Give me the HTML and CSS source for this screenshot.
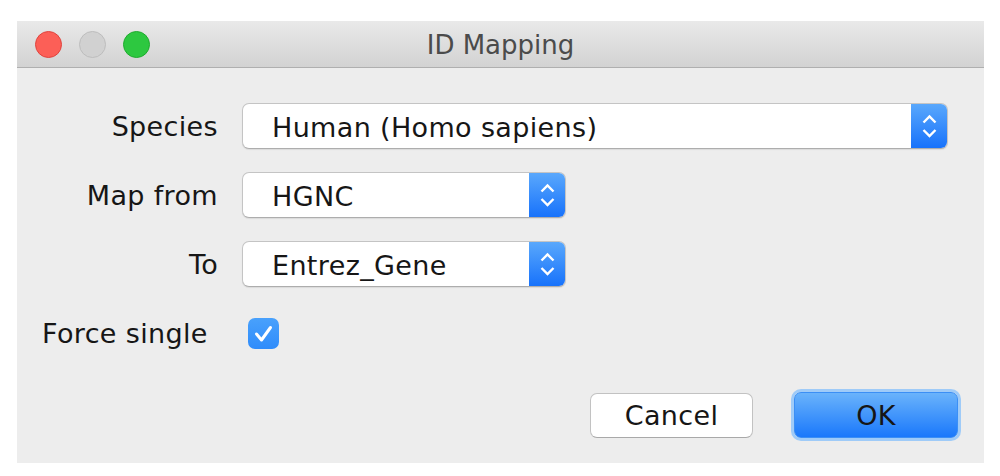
FILE: index.html
```html
<!DOCTYPE html>
<html>
<head>
<meta charset="utf-8">
<title>ID Mapping</title>
<link rel="stylesheet" href="styles.css">
</head>
<body>
<div class="window">
  <div class="titlebar">
    <div class="lights">
      <span class="light red"></span>
      <span class="light gray"></span>
      <span class="light green"></span>
    </div>
    <div class="title">ID Mapping</div>
  </div>
  <div class="content">
    <div class="form">
      <div class="label">Species</div>
      <div class="select wide">
        <span class="value">Human (Homo sapiens)</span>
        <span class="stepper"><svg width="37" height="46" viewBox="0 0 37 46"><path d="M12.5 19.5 L18.5 13.5 L24.5 19.5" /><path d="M12.5 27 L18.5 33 L24.5 27" /></svg></span>
      </div>
      <div class="label">Map from</div>
      <div class="select narrow">
        <span class="value">HGNC</span>
        <span class="stepper"><svg width="37" height="46" viewBox="0 0 37 46"><path d="M12.5 19.5 L18.5 13.5 L24.5 19.5" /><path d="M12.5 27 L18.5 33 L24.5 27" /></svg></span>
      </div>
      <div class="label">To</div>
      <div class="select narrow">
        <span class="value">Entrez_Gene</span>
        <span class="stepper"><svg width="37" height="46" viewBox="0 0 37 46"><path d="M12.5 19.5 L18.5 13.5 L24.5 19.5" /><path d="M12.5 27 L18.5 33 L24.5 27" /></svg></span>
      </div>
      <div class="label left">Force single</div>
      <div class="check-cell">
        <span class="checkbox"><svg width="31" height="31" viewBox="0 0 31 31"><path d="M8.5 16 L13.5 22 L22.5 9.5" /></svg></span>
      </div>
    </div>
    <div class="buttons">
      <button class="btn cancel">Cancel</button>
      <button class="btn ok">OK</button>
    </div>
  </div>
</div>
</body>
</html>
```
FILE: styles.css
```css
html, body {
  margin: 0;
  padding: 0;
  background: #ffffff;
}
body {
  font-family: "DejaVu Sans", Verdana, sans-serif;
  color: #161616;
}
.window {
  margin: 21px 0 0 17px;
  width: 967px;
  height: 442px;
  background: #ededed;
  display: flex;
  flex-direction: column;
}
.titlebar {
  position: relative;
  height: 46px;
  background: linear-gradient(#e9e9e9, #d2d2d2);
  border-bottom: 1px solid #afafaf;
  display: flex;
  align-items: center;
  justify-content: center;
}
.lights {
  position: absolute;
  left: 18px;
  top: 10px;
  display: flex;
  gap: 17px;
}
.light {
  width: 25px;
  height: 25px;
  border-radius: 50%;
  border: 1px solid;
}
.light.red { background: #fc5f57; border-color: #e0443e; }
.light.gray { background: #d1d1d1; border-color: #bdbdbd; }
.light.green { background: #2dc840; border-color: #1fab2e; }
.title {
  font-size: 26px;
  color: #4b4b4b;
  margin-top: 2px;
}
.content {
  flex: 1;
  padding: 35px 26px 25px 25px;
  display: flex;
  flex-direction: column;
}
.form {
  display: grid;
  grid-template-columns: 176px 1fr;
  column-gap: 24px;
  row-gap: 23px;
  align-items: center;
}
.label {
  font-size: 27px;
  letter-spacing: 0.35px;
  text-align: right;
  line-height: 48px;
  height: 46px;
}
.label.left {
  text-align: left;
}
.select {
  height: 44px;
  background: #ffffff;
  border: 1px solid #c4c4c4;
  border-bottom-color: #adadad;
  border-radius: 7px;
  display: flex;
  align-items: center;
  box-shadow: 0 1px 1px rgba(0,0,0,0.08);
  overflow: hidden;
}
.select.wide { width: 704px; }
.select.narrow { width: 322px; }
.value {
  flex: 1;
  padding-left: 29px;
  padding-top: 2px;
  font-size: 27px;
  letter-spacing: 0.35px;
  color: #161616;
}
.stepper {
  width: 37px;
  height: 46px;
  margin: -1px -1px -1px 0;
  background: linear-gradient(#5ba9fc, #1671fb);
  border-radius: 0 7px 7px 0;
  display: flex;
}
.stepper path {
  fill: none;
  stroke: #ffffff;
  stroke-width: 2.4;
}
.check-cell {
  height: 46px;
  display: flex;
  align-items: center;
}
.checkbox {
  margin-left: 6px;
  width: 31px;
  height: 31px;
  border-radius: 7px;
  background: linear-gradient(#49a1fc, #2f8cfb);
  display: flex;
}
.checkbox path {
  fill: none;
  stroke: #ffffff;
  stroke-width: 3;
  stroke-linecap: round;
  stroke-linejoin: round;
}
.buttons {
  margin-top: auto;
  display: flex;
  justify-content: flex-end;
  align-items: center;
  gap: 41px;
}
.btn {
  font-family: "DejaVu Sans", Verdana, sans-serif;
  font-size: 27px;
  letter-spacing: 0.35px;
  color: #161616;
  height: 46px;
  border-radius: 7px;
  padding: 0;
  margin: 0;
}
.cancel {
  width: 163px;
  height: 45px;
  background: #ffffff;
  border: 1px solid #c2c2c2;
  border-bottom-color: #a9a9a9;
}
.ok {
  width: 164px;
  background: linear-gradient(#6ab3fb, #1a78fb);
  border: 1px solid #3b8ff5;
  box-shadow: 0 0 0 3px #9fcbf8;
}
```
